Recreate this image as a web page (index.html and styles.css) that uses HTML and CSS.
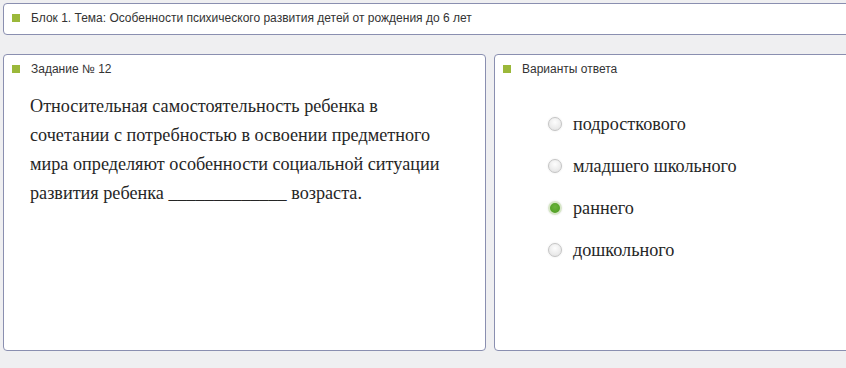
FILE: index.html
```html
<!DOCTYPE html>
<html lang="ru">
<head>
  <meta charset="UTF-8" />
  <title>Задание № 12</title>
  <link rel="stylesheet" href="styles.css">
</head>
<body>
  <div class="block-bar">
    <span class="mark"></span>Блок 1. Тема: Особенности психического развития детей от рождения до 6 лет
  </div>

  <div class="panels">
    <div class="panel task">
      <div class="panel-title"><span class="mark"></span>Задание № 12</div>
      <p class="question">
        Относительная самостоятельность ребенка в сочетании с потребностью в освоении предметного
        мира определяют особенности социальной ситуации развития ребенка _____________ возраста.
      </p>
    </div>

    <div class="panel answers">
      <div class="panel-title"><span class="mark"></span>Варианты ответа</div>
      <ul class="options">
        <li><span class="radio"></span>подросткового</li>
        <li><span class="radio"></span>младшего школьного</li>
        <li><span class="radio checked"></span>раннего</li>
        <li><span class="radio"></span>дошкольного</li>
      </ul>
    </div>
  </div>
</body>
</html>
```

FILE: styles.css
```css
body {
  margin: 0;
  padding: 3px 0 0 3px;
  background: #efeff1;
  font-family: "Liberation Sans", Arial, sans-serif;
  font-size: 12px;
  color: #333;
  overflow: hidden;
}
.mark {
  display: inline-block;
  width: 8px;
  height: 8px;
  background: #9bb83a;
  margin-right: 11px;
}
.block-bar {
  box-sizing: border-box;
  display: flex;
  align-items: center;
  width: 900px;
  height: 32px;
  background: #fff;
  border: 1px solid #8a8fb0;
  border-radius: 4px;
  padding: 0 0 2px 8px;
  line-height: 14px;
}
.panels {
  display: flex;
  gap: 8px;
  margin-top: 19px;
}
.panel {
  box-sizing: border-box;
  height: 297px;
  background: #fff;
  border: 1px solid #8a8fb0;
  border-radius: 4px;
  flex-shrink: 0;
}
.task {
  width: 483px;
}
.answers {
  width: 400px;
}
.panel-title {
  display: flex;
  align-items: center;
  padding: 7px 0 0 8px;
  line-height: 14px;
}
.question {
  margin: 16px 0 0 26px;
  width: 420px;
  font-family: "Liberation Serif", "Times New Roman", serif;
  font-size: 18.2px;
  line-height: 29px;
  color: #262626;
}
.options {
  list-style: none;
  margin: 0;
  padding: 27px 0 0 53px;
  font-family: "Liberation Serif", "Times New Roman", serif;
  font-size: 18.2px;
  color: #262626;
}
.options li {
  display: flex;
  align-items: center;
  height: 42px;
}
.radio {
  box-sizing: border-box;
  width: 14px;
  height: 14px;
  border-radius: 50%;
  border: 1px solid #c4c4c4;
  background: radial-gradient(circle at 50% 35%, #fdfdfd, #e0e0e0);
  box-shadow: 0 0 2px #e4e4e4;
  margin-right: 11px;
}
.radio.checked {
  border: 2px solid #d7e6c8;
  background: radial-gradient(circle at 50% 40%, #6cb43c, #4a9a1e);
}
```
